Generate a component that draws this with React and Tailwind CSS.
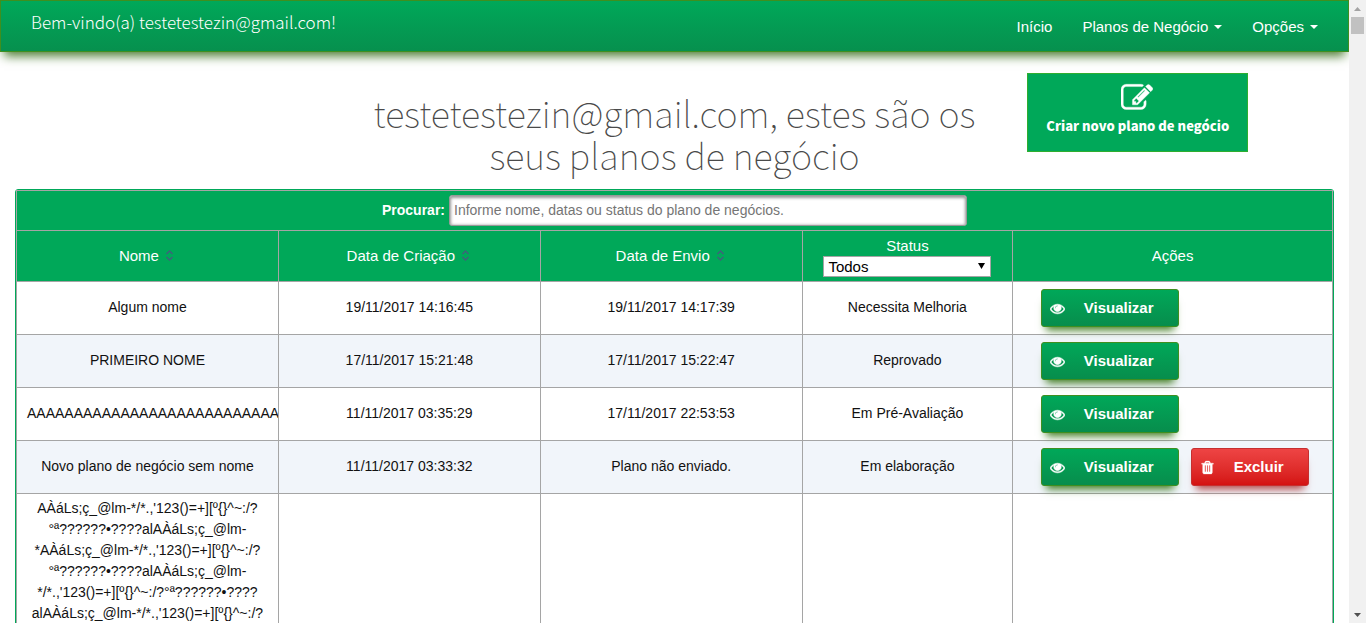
const LONG_NAME = [
  "AÀáLs;ç_@lm-*/*.,'123()=+][º{}^~:/?",
  "°ª??????•????alAÀáLs;ç_@lm-",
  "*AÀáLs;ç_@lm-*/*.,'123()=+][º{}^~:/?",
  "°ª??????•????alAÀáLs;ç_@lm-",
  "*/*.,'123()=+][º{}^~:/?°ª??????•????",
  "alAÀáLs;ç_@lm-*/*.,'123()=+][º{}^~:/?",
];

const PLANS = [
  { name: "Algum nome", created: "19/11/2017 14:16:45", sent: "19/11/2017 14:17:39", status: "Necessita Melhoria" },
  { name: "PRIMEIRO NOME", created: "17/11/2017 15:21:48", sent: "17/11/2017 15:22:47", status: "Reprovado" },
  { name: "AAAAAAAAAAAAAAAAAAAAAAAAAAA", created: "11/11/2017 03:35:29", sent: "17/11/2017 22:53:53", status: "Em Pré-Avaliação" },
  { name: "Novo plano de negócio sem nome", created: "11/11/2017 03:33:32", sent: "Plano não enviado.", status: "Em elaboração", removable: true },
];

function Glyph({ d, className }) {
  return (
    <svg viewBox="0 0 1792 1792" fill="currentColor" stroke="currentColor" aria-hidden="true" className={className}>
      <path d={d} />
    </svg>
  );
}

const EYE =
  "M1664 960q-152-236-381-353 61 104 61 225 0 185-131.5 316.5t-316.5 131.5-316.5-131.5-131.5-316.5q0-121 61-225-229 117-381 353 133 205 333.5 326.5t434.5 121.5 434.5-121.5 333.5-326.5zm-720-384q0-20-14-34t-34-14q-125 0-214.5 89.5t-89.5 214.5q0 20 14 34t34 14 34-14 14-34q0-86 61-147t147-61q20 0 34-14t14-34zm848 384q0 34-20 69-140 230-376.5 368.5t-499.5 138.5-499.5-139-376.5-368q-20-35-20-69t20-69q140-229 376.5-368t499.5-139 499.5 139 376.5 368q20 35 20 69z";
const TRASH =
  "M704 1376v-704q0-14-9-23t-23-9h-64q-14 0-23 9t-9 23v704q0 14 9 23t23 9h64q14 0 23-9t9-23zm256 0v-704q0-14-9-23t-23-9h-64q-14 0-23 9t-9 23v704q0 14 9 23t23 9h64q14 0 23-9t9-23zm256 0v-704q0-14-9-23t-23-9h-64q-14 0-23 9t-9 23v704q0 14 9 23t23 9h64q14 0 23-9t9-23zm-544-992h448l-48-117q-7-9-17-11h-317q-10 2-17 11zm928 32v64q0 14-9 23t-23 9h-96v948q0 83-47 143.5t-113 60.5h-832q-66 0-113-58.5t-47-141.5v-952h-96q-14 0-23-9t-9-23v-64q0-14 9-23t23-9h309l70-167q15-37 54-63t79-26h320q40 0 79 26t54 63l70 167h309q14 0 23 9t9 23z";
const EDIT =
  "M888 1184l116-116-152-152-116 116v56h96v96h56zm440-720q-16-16-33 1l-350 350q-17 17-1 33t33-1l350-350q17-17 1-33zm80 594v190q0 119-84.5 203.5t-203.5 84.5h-832q-119 0-203.5-84.5t-84.5-203.5v-832q0-119 84.5-203.5t203.5-84.5h832q63 0 117 25 15 7 18 23 3 17-9 29l-49 49q-14 14-32 8-23-6-45-6h-832q-66 0-113 47t-47 113v832q0 66 47 113t113 47h832q66 0 113-47t47-113v-126q0-13 9-22l64-64q15-15 35-7t20 29zm-96-738l288 288-672 672h-288v-288zm444 132l-92 92-288-288 92-92q28-28 68-28t68 28l152 152q28 28 28 68t-28 68z";

function Caret() {
  return (
    <svg viewBox="0 0 8 4" aria-hidden="true" className="mt-[2px] h-1 w-2 fill-white">
      <path d="M0 0h8L4 4z" />
    </svg>
  );
}

function SortHeader({ children }) {
  return (
    <th scope="col" className="border border-[#a5a5a5] px-0 pt-0 pb-[2px] font-normal">
      <button type="button" className="inline-flex items-center gap-[7px] pr-[3px]">
        {children}
        <svg viewBox="0 0 7 11" fill="none" stroke="#40607c" strokeWidth="1.4" aria-hidden="true" className="h-[11px] w-[7px]">
          <path d="M0.5 4 3.5 1l3 3M0.5 7l3 3 3-3" />
        </svg>
      </button>
    </th>
  );
}

function ViewButton() {
  return (
    <button
      type="button"
      className="flex h-[38px] w-[138px] items-center rounded-[3px] border border-[#3f8f1f] bg-linear-to-b from-[#00a859] to-[#078d4c] pl-2 text-[15px] font-bold text-white shadow-[0_8px_8px_-5px_#3c7a1c]"
    >
      <Glyph d={EYE} className="mt-[2px] size-[15px] stroke-60" />
      <span className="flex-1 pr-[6px] text-center">Visualizar</span>
    </button>
  );
}

function DeleteButton() {
  return (
    <button
      type="button"
      className="flex h-[38px] w-[118px] items-center rounded-[3px] border border-[#c62f2f] bg-linear-to-b from-[#ee4444] to-[#d41111] pl-2 text-[15px] font-bold text-white shadow-[0_8px_8px_-5px_#b04040]"
    >
      <Glyph d={TRASH} className="mt-[2px] size-[15px] stroke-40" />
      <span className="flex-1 pr-[6px] text-center">Excluir</span>
    </button>
  );
}

function Cell({ children }) {
  return <td className="overflow-hidden border border-[#a5a5a5] px-[10px] pt-1 pb-[6px] text-center">{children}</td>;
}

function Scrollbar() {
  return (
    <div aria-hidden="true" className="flex w-[17px] shrink-0 flex-col items-center justify-between bg-[#f1f1f1]">
      <div className="flex flex-col items-center">
        <div className="flex h-[17px] items-center">
          <svg viewBox="0 0 7 4" className="h-1 w-[7px] fill-[#a3a3a3]">
            <path d="M3.5 0 7 4H0z" />
          </svg>
        </div>
        <div className="h-[17px] w-[13px] bg-[#c1c1c1]" />
      </div>
      <div className="flex h-[17px] items-center">
        <svg viewBox="0 0 7 4" className="h-1 w-[7px] fill-[#505050]">
          <path d="M0 0h7L3.5 4z" />
        </svg>
      </div>
    </div>
  );
}

export default function App() {
  return (
    <div className="flex h-screen overflow-hidden bg-white font-['Liberation_Sans',Arial,sans-serif] text-sm leading-[21px] text-[#111]">
      <div className="min-w-0 flex-1 overflow-hidden">
        <nav className="flex h-[52px] items-center justify-between border border-[#3f8f1f] bg-linear-to-b from-[#00a859] to-[#06904e] px-[30px] text-white shadow-[0_8px_10px_-4px_#4a7a30]">
          <p className="pb-[10px] font-['Noto_Sans_CJK_JP',sans-serif] text-[17px] font-light">Bem-vindo(a) testetestezin@gmail.com!</p>
          <div className="flex items-center gap-[30px] text-[15px]">
            <a href="#inicio">Início</a>
            <button type="button" className="flex items-center gap-[6px]">
              Planos de Negócio <Caret />
            </button>
            <button type="button" className="flex items-center gap-[6px]">
              Opções <Caret />
            </button>
          </div>
        </nav>

        <header className="grid grid-cols-4 px-[15px] pt-[21px]">
          <h1 className="col-span-2 col-start-2 pt-[18px] text-center font-['Noto_Sans_CJK_JP',sans-serif] text-[36px] leading-[42px] font-thin text-[#4a4a4a]">
            testetestezin@gmail.com, estes são os seus planos de negócio
          </h1>
          <div className="pl-[23px]">
            <button
              type="button"
              className="flex h-[79px] w-[221px] flex-col items-center border border-[#2fae2f] bg-[#00a859] pt-2 font-['Noto_Sans_CJK_JP',sans-serif] text-[13px] leading-6 font-black text-white"
            >
              <Glyph d={EDIT} className="mr-[2px] size-8 stroke-20" />
              Criar novo plano de negócio
            </button>
          </div>
        </header>

        <main className="px-[15px] pt-[14px]">
          <div className="rounded-[3px] border border-[#00a859]">
            <table className="w-full table-fixed border-collapse">
              <colgroup>
                <col className="w-[19.9%]" />
                <col className="w-[19.9%]" />
                <col className="w-[19.9%]" />
                <col className="w-[16%]" />
                <col />
              </colgroup>
              <thead className="bg-[#00a859] text-white">
                <tr className="h-10">
                  <td colSpan={5} className="border border-[#a5a5a5] p-0">
                    <div className="flex items-center justify-center gap-1">
                      <label htmlFor="search" className="font-bold">Procurar:</label>
                      <input
                        id="search"
                        type="text"
                        placeholder="Informe nome, datas ou status do plano de negócios."
                        className="h-[31px] w-[518px] rounded-[3px] border border-[#999] bg-white px-1 pb-[2px] text-black shadow-[inset_0_1px_3px_1px_#999] placeholder:text-[#757575]"
                      />
                    </div>
                  </td>
                </tr>
                <tr className="h-[51px] text-[15px]">
                  <SortHeader>Nome</SortHeader>
                  <SortHeader>Data de Criação</SortHeader>
                  <SortHeader>Data de Envio</SortHeader>
                  <th scope="col" className="border border-[#a5a5a5] p-0 font-normal">
                    <label htmlFor="status" className="block">Status</label>
                    <div className="relative mx-auto h-[21px] w-[168px]">
                      <select
                        id="status"
                        className="block h-full w-full appearance-none border border-[#a5a5a5] bg-white px-1 text-[15px] leading-[19px] text-black"
                      >
                        <option>Todos</option>
                      </select>
                      <svg viewBox="0 0 7 6" aria-hidden="true" className="pointer-events-none absolute top-[7px] right-[6px] h-[6px] w-[7px] fill-black">
                        <path d="M0 0h7L3.5 6z" />
                      </svg>
                    </div>
                  </th>
                  <th scope="col" className="border border-[#a5a5a5] px-0 pt-0 pb-[2px] font-normal">Ações</th>
                </tr>
              </thead>
              <tbody>
                {PLANS.map((plan) => (
                  <tr key={plan.created} className="h-[53px] even:bg-[#f1f5fa]">
                    <Cell>{plan.name}</Cell>
                    <Cell>{plan.created}</Cell>
                    <Cell>{plan.sent}</Cell>
                    <Cell>{plan.status}</Cell>
                    <td className="border border-[#a5a5a5] p-0">
                      <div className="flex gap-3 pb-px pl-7">
                        <ViewButton />
                        {plan.removable && <DeleteButton />}
                      </div>
                    </td>
                  </tr>
                ))}
                <tr className="align-top">
                  <Cell>
                    {LONG_NAME.map((line, i) => (
                      <span key={i} className="block whitespace-nowrap">{line}</span>
                    ))}
                  </Cell>
                  <Cell />
                  <Cell />
                  <Cell />
                  <Cell />
                </tr>
              </tbody>
            </table>
          </div>
        </main>
      </div>
      <Scrollbar />
    </div>
  );
}
